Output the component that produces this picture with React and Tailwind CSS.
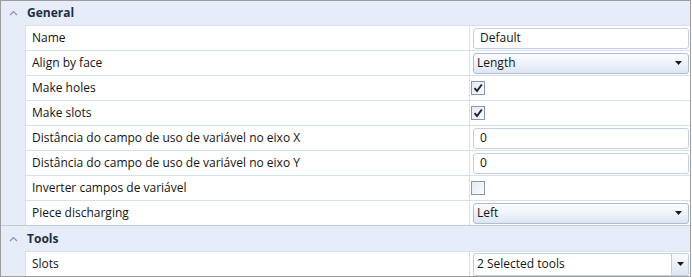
import React from "react";

const Chevron = () => (
  <svg width="9" height="6" viewBox="0 0 9 6" className="block">
    <path d="M1 5 L4.5 1.5 L8 5" fill="none" stroke="#8496b3" strokeWidth="1.2" />
  </svg>
);

const Arrow = () => (
  <svg width="7" height="4" viewBox="0 0 7 4" className="block">
    <path d="M0 0 H7 L3.5 4 Z" fill="#1a1a1a" />
  </svg>
);

const Header = ({ title, tall }) => (
  <div className={`flex ${tall ? "h-[25px]" : "h-[24px]"} items-center bg-[#e6edf8]`}>
    <div className="flex w-[24px] justify-center pl-[1px]">
      <Chevron />
    </div>
    <span className="ml-[2px] font-bold text-[#1f2d44]">{title}</span>
  </div>
);

const TextBox = ({ value }) => (
  <div className="flex h-[21px] flex-1 items-center rounded-[3px] border border-[#c3cfe0] bg-white pl-[6px]">
    {value}
  </div>
);

const Combo = ({ value }) => (
  <div className="flex h-[21px] flex-1 items-center justify-between rounded-[3px] border border-[#aebdd2] bg-gradient-to-b from-[#fbfcfe] via-[#eef3fa] to-[#dbe5f2] pl-[3px] pr-[6px]">
    <span>{value}</span>
    <Arrow />
  </div>
);

const MultiCombo = ({ value }) => (
  <div className="flex h-[23px] flex-1 items-stretch rounded-[2px] border border-[#c3cfe0] bg-white">
    <span className="flex flex-1 items-center pl-[3px]">{value}</span>
    <div className="flex w-[17px] items-center justify-center border-l border-[#c3cfe0] bg-gradient-to-b from-[#fafbfd] to-[#dde6f2]">
      <Arrow />
    </div>
  </div>
);

const CheckBox = ({ checked }) => (
  <div className="-ml-[2px] flex h-[14px] w-[14px] items-center justify-center border border-[#8597b4] bg-gradient-to-br from-[#e4eaf4] to-[#fbfcfe]">
    {checked && (
      <svg width="10" height="10" viewBox="0 0 10 10" className="block">
        <path d="M1.5 5.2 L4 8 L8.8 1.5" fill="none" stroke="#1a2233" strokeWidth="1.9" />
      </svg>
    )}
  </div>
);

const Row = ({ label, children }) => (
  <div className="flex h-[25px]">
    <div className="w-[24px] bg-[#e6edf8]" />
    <div className="flex flex-1 border-l border-t border-[#d4dfef]">
      <div className="flex w-[444px] items-center border-r border-[#d4dfef] pl-[6px]">{label}</div>
      <div className="flex flex-1 items-center pl-[3px] pr-[1px]">{children}</div>
    </div>
  </div>
);

export default function App() {
  return (
    <div className="h-[277px] w-[692px] bg-white">
      <div
        className="flex h-[277px] w-[691px] flex-col border border-[#9d9d9d] text-[12px] text-[#141414]"
        style={{ fontFamily: '"Open Sans", "Noto Sans", sans-serif' }}
      >
        <Header title="General" />
        <Row label="Name">
          <TextBox value="Default" />
        </Row>
        <Row label="Align by face">
          <Combo value="Length" />
        </Row>
        <Row label="Make holes">
          <CheckBox checked />
        </Row>
        <Row label="Make slots">
          <CheckBox checked />
        </Row>
        <Row label="Distância do campo de uso de variável no eixo X">
          <TextBox value="0" />
        </Row>
        <Row label="Distância do campo de uso de variável no eixo Y">
          <TextBox value="0" />
        </Row>
        <Row label="Inverter campos de variável">
          <CheckBox />
        </Row>
        <Row label="Piece discharging">
          <Combo value="Left" />
        </Row>
        <div className="h-[1px] bg-[#c2cad6]" />
        <Header title="Tools" tall />
        <Row label="Slots">
          <MultiCombo value="2 Selected tools" />
        </Row>
      </div>
    </div>
  );
}
